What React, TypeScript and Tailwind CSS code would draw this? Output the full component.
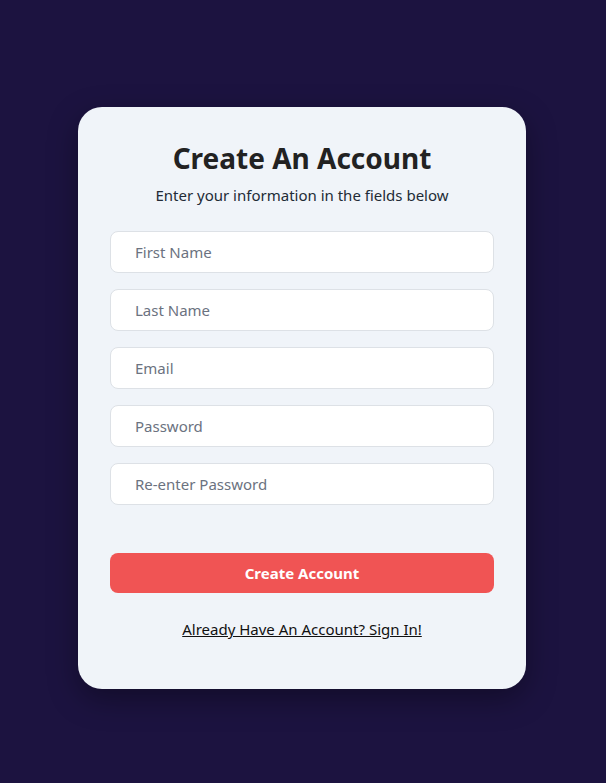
import React from "react";

const fields = ["First Name", "Last Name", "Email", "Password", "Re-enter Password"];

export default function App() {
  return (
    <div
      className="min-h-[783px] w-full bg-[#1c1340] flex items-start justify-start pt-[107px] pl-[78px]"
      style={{ fontFamily: '"Noto Sans", "Open Sans", sans-serif' }}
    >
      <div className="w-[448px] h-[582px] bg-[#f0f4f9] rounded-3xl px-8 pt-[33px] shadow-[0_10px_30px_rgba(0,0,0,0.35)] flex flex-col">
        <h1 className="text-[28px] leading-9 font-bold text-center text-[#222222]">Create An Account</h1>
        <p className="text-[15px] leading-6 text-center text-[#222b36] mt-[7px]">
          Enter your information in the fields below
        </p>
        <div className="flex flex-col gap-4 mt-6">
          {fields.map((f) => (
            <input
              key={f}
              type={f.includes("Password") ? "password" : "text"}
              placeholder={f}
              className="h-[42px] w-full rounded-lg border border-[#dde1e6] bg-white pl-6 text-[15px] text-[#333] placeholder:text-[#6b7280] outline-none"
            />
          ))}
        </div>
        <button className="mt-12 h-10 w-full rounded-lg bg-[#f05454] text-white font-bold text-[15px]">
          Create Account
        </button>
        <a href="#" className="mt-6 text-center text-[15px] leading-6 text-[#111] underline">
          Already Have An Account? Sign In!
        </a>
      </div>
    </div>
  );
}
